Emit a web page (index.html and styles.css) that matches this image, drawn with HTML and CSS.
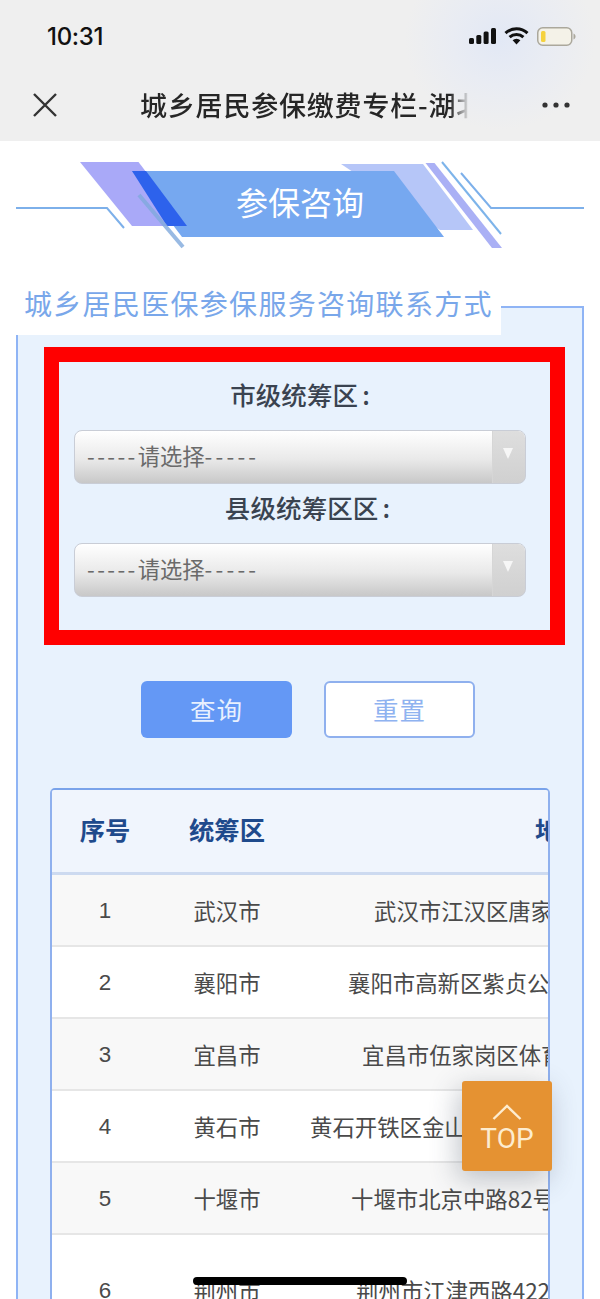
FILE: index.html
```html
<!DOCTYPE html>
<html lang="zh-CN">
<head>
<meta charset="utf-8">
<title>城乡居民参保缴费专栏</title>
<link rel="stylesheet" href="styles.css">
</head>
<body>
<div class="screen">
  <header class="top">
    <div class="status">
      <span class="time">10:31</span>
      <div class="status-icons">
        <svg class="ic-signal" width="27" height="16" viewBox="0 0 27 16"><rect x="0" y="10" width="5" height="6" rx="1.5"/><rect x="7.300" y="7" width="5" height="9" rx="1.500"/><rect x="14.600" y="3.500" width="5" height="12.500" rx="1.500"/><rect x="22" y="0" width="5" height="16" rx="1.500"/></svg>
        <svg class="ic-wifi" width="25" height="18" viewBox="0 0 25 18"><path d="M1.500 6.200a16 16 0 0 1 22 0" fill="none" stroke="#111" stroke-width="3"/><path d="M5.600 10.200a10.200 10.200 0 0 1 13.800 0" fill="none" stroke="#111" stroke-width="3"/><path d="M8.600 13.300 12.500 17.500l3.900-4.200a5.600 5.600 0 0 0-7.800 0z" fill="#111"/></svg>
        <svg class="ic-battery" width="39" height="19" viewBox="0 0 39 19"><rect x="0.750" y="0.750" width="34" height="17.500" rx="5" fill="#f4f2e8" stroke="#aba89c" stroke-width="1.500"/><rect x="4" y="4" width="4.500" height="11" rx="1.500" fill="#f5d23e"/><path d="M36.500 6.500c1.400.5 2 1.600 2 3s-.6 2.500-2 3z" fill="#aba89c"/></svg>
      </div>
    </div>
    <nav class="nav">
      <svg class="ic-close" width="26" height="26" viewBox="0 0 26 26"><path d="M2 2 24 24M24 2 2 24" stroke="#333" stroke-width="2.400" fill="none"/></svg>
      <div class="nav-title">城乡居民参保缴费专栏-湖北</div>
      <svg class="ic-more" width="28" height="6" viewBox="0 0 28 6"><circle cx="3" cy="3" r="2.600"/><circle cx="14" cy="3" r="2.600"/><circle cx="25" cy="3" r="2.600"/></svg>
    </nav>
  </header>

  <main class="page">
    <svg class="banner" width="600" height="109" viewBox="0 141 600 109">
      <path d="M16 208H107L124 228" fill="none" stroke="#7db0ea" stroke-width="2"/>
      <path d="M584 208H491L461 173" fill="none" stroke="#7db0ea" stroke-width="2"/>
      <path d="M80 162H138.500L187 226H132Z" fill="#a9a9f8"/>
      <path d="M341 164H423L473 230H440Z" fill="#b6c6f8"/>
      <path d="M132 171H394L444 237H182Z" fill="#76a8f0"/>
      <path d="M132 171H146L187 226H167Z" fill="#2d62ec"/>
      <path d="M425.500 163H434.500L502 248H492Z" fill="#aab0f5"/>
      <path d="M442 162 501 234" fill="none" stroke="#7db4ea" stroke-width="2"/>
      <path d="M139 195 183 247" fill="none" stroke="#7fa9dc" stroke-width="4" opacity="0.8"/>
      <text class="banner-text" x="300" y="215" text-anchor="middle">参保咨询</text>
    </svg>

    <section class="panel">
      <h2 class="panel-title">城乡居民医保参保服务咨询联系方式</h2>

      <div class="filter">
        <div class="field-label first">市级统筹区<span class="colon">:</span></div>
        <div class="select"><span class="select-text"><span class="dash">-----</span>请选择<span class="dash">-----</span></span><span class="select-arrow"></span></div>
        <div class="field-label second">县级统筹区区<span class="colon">:</span></div>
        <div class="select"><span class="select-text"><span class="dash">-----</span>请选择<span class="dash">-----</span></span><span class="select-arrow"></span></div>
      </div>

      <div class="actions">
        <button class="btn btn-primary">查询</button>
        <button class="btn btn-ghost">重置</button>
      </div>

      <div class="table">
        <div class="row head"><span>序号</span><span>统筹区</span><span class="addr a0">地址</span></div>
        <div class="row odd"><span class="num">1</span><span>武汉市</span><span class="addr a1">武汉市江汉区唐家</span></div>
        <div class="row"><span class="num">2</span><span>襄阳市</span><span class="addr a2">襄阳市高新区紫贞公园</span></div>
        <div class="row odd"><span class="num">3</span><span>宜昌市</span><span class="addr a3">宜昌市伍家岗区体育</span></div>
        <div class="row"><span class="num">4</span><span>黄石市</span><span class="addr a4">黄石开铁区金山</span></div>
        <div class="row odd"><span class="num">5</span><span>十堰市</span><span class="addr a5">十堰市北京中路82号</span></div>
        <div class="row tall"><span class="num">6</span><span>荆州市</span><span class="addr a6">荆州市江津西路422</span></div>
      </div>
    </section>
  </main>

  <a class="to-top">
    <svg class="to-top-icon" width="30" height="16" viewBox="0 0 30 16"><path d="M1.500 15 15 2 28.500 15" fill="none" stroke="#fdeccf" stroke-width="2.400"/></svg>
    <span class="to-top-text">TOP</span>
  </a>
  <div class="home-bar"></div>
</div>
</body>
</html>
```

FILE: styles.css
```css
* { box-sizing: border-box; }
html, body { margin: 0; padding: 0; background: #fff; }
body { font-family: "Liberation Sans", "Noto Sans CJK SC", sans-serif; }

.screen { position: relative; width: 600px; height: 1299px; overflow: hidden; background: #fff; }

/* top chrome */
.top {
  height: 141px;
  background: radial-gradient(ellipse 95px 90px at 500px 40px, #e2e8f5 0%, #e9ecf3 50%, #efefef 100%), #efefef;
}
.status { height: 72px; display: flex; align-items: center; justify-content: space-between; padding: 0 24px 0 47px; }
.time { font-family: Inter, "Liberation Sans", sans-serif; font-size: 24px; font-weight: 500; color: #111; letter-spacing: -0.300px; }
.status-icons { display: flex; align-items: center; gap: 8px; }
.ic-signal { fill: #111; }
.nav { height: 65px; display: flex; align-items: center; padding: 0 30px 0 32px; }
.ic-close { flex: none; }
.nav-title {
  width: 330px; margin-left: 82px; white-space: nowrap; overflow: hidden;
  font-family: "Noto Sans CJK SC", sans-serif; font-size: 27px; font-weight: 500; color: #262626; letter-spacing: 0.800px;
  -webkit-mask-image: linear-gradient(90deg, #000 94%, transparent 100%);
  mask-image: linear-gradient(90deg, #000 94%, transparent 100%);
}
.ic-more { flex: none; margin-left: auto; fill: #333; }

/* page */
.banner { display: block; }
.banner-text { font-family: "Noto Sans CJK SC", sans-serif; font-size: 32px; fill: #fff; }

.panel {
  position: relative;
  margin: 56px 16px 0;
  padding: 39px 17px 0 26px;
  background: #e8f2fd;
  border: 2px solid #8fb4f5;
  border-bottom: 0;
  height: 1000px;
}
.panel-title {
  position: absolute; left: -2px; top: -23px; margin: 0;
  width: 485px; height: 50px; padding-left: 8px;
  background: #fff;
  font-family: "Noto Sans CJK SC", sans-serif; font-size: 28px; font-weight: 400; line-height: 36px;
  color: #79a7ea; letter-spacing: 1.300px; white-space: nowrap;
}

.filter { width: 521px; height: 298px; border: 15px solid #f00; padding: 0 24px 0 15px; }
.field-label { text-align: center; font-family: "Noto Sans CJK SC", sans-serif; font-size: 25.500px; font-weight: 500; color: #3a4350; letter-spacing: 0.100px; }
.colon { margin-left: 4px; }
.field-label.first { height: 68px; line-height: 64px; }
.field-label.second { height: 59px; line-height: 46px; padding-left: 15px; }
.select {
  display: flex; height: 54px; border: 1px solid #c9cdd6; border-radius: 8px; overflow: hidden;
  background: linear-gradient(180deg, #fff 0%, #e9e9e9 55%, #c8c8c8 100%);
}
.select-text { flex: 1; padding-left: 12px; line-height: 48px; font-family: "Noto Sans CJK SC", sans-serif; font-size: 22.300px; color: #6a6a6a; white-space: nowrap; }
.dash { letter-spacing: 2.400px; }
.dash:last-child { letter-spacing: 3.200px; }
.select-arrow { position: relative; width: 33px; background: linear-gradient(180deg, #dedede 0%, #d0d0d0 100%); border-left: 1px solid #d6d6d6; }
.select-arrow::after {
  content: ""; position: absolute; left: 10px; top: 17px;
  border-left: 5px solid transparent; border-right: 5px solid transparent; border-top: 11px solid #f6f6f6;
}

.actions { display: flex; gap: 32px; margin: 36px 0 0 97px; }
.btn {
  width: 151px; height: 57px; padding: 0 0 2px; border-radius: 6px;
  font-family: "Noto Sans CJK SC", sans-serif; font-size: 25.500px; letter-spacing: 1px;
}
.btn-primary { background: #6498f5; border: 0; color: #e8f0fe; }
.btn-ghost { background: #fff; border: 2px solid #8fb0ee; color: #8fb3f0; }

.table {
  margin: 50px 0 0 6px; width: 500px; background: #fff;
  border-top: 2px solid #79a3ea; border-left: 2px solid #8fb0ee; border-right: 2px solid #8fb0ee;
  border-radius: 5px 5px 0 0; overflow: hidden;
}
.row {
  display: grid; grid-template-columns: 106px 138px 1fr; height: 72px; align-items: center;
  text-align: center; font-family: "Noto Sans CJK SC", sans-serif; font-size: 22.400px; color: #4a4a4a;
  border-bottom: 2px solid #e6e6e6; white-space: nowrap;
}
.row.odd { background: #f8f8f8; }
.row.head {
  height: 85px; padding-bottom: 5px; background: #f0f5fd; border-bottom: 3px solid #cddaf0;
  font-size: 25.300px; font-weight: 700; color: #1f4a8c;
}
.row.tall { height: 112px; }
.num { font-family: "Liberation Sans", sans-serif; padding-top: 2px; }
.addr { display: block; text-align: left; overflow: hidden; }
.a0 { padding-left: 239px; }
.a1 { padding-left: 78px; }
.a2 { padding-left: 52px; }
.a3 { padding-left: 66px; }
.a4 { padding-left: 14px; }
.a5 { padding-left: 55px; }
.a6 { padding-left: 60px; }

/* floating */
.to-top {
  position: absolute; left: 462px; top: 1081px; width: 90px; height: 90px;
  display: flex; flex-direction: column; align-items: center; padding-top: 23px;
  background: #e59232; border-radius: 3px; box-shadow: -4px 8px 28px rgba(60, 70, 90, 0.32);
  font-family: Roboto, "Liberation Sans", sans-serif; font-size: 28px; font-weight: 400; line-height: 34px; color: #fdeccf;
}
.to-top-icon { display: block; }
.to-top-text { margin-top: 2px; }
.home-bar { position: absolute; left: 193px; top: 1277px; width: 214px; height: 8px; border-radius: 4px; background: #000; }
```
